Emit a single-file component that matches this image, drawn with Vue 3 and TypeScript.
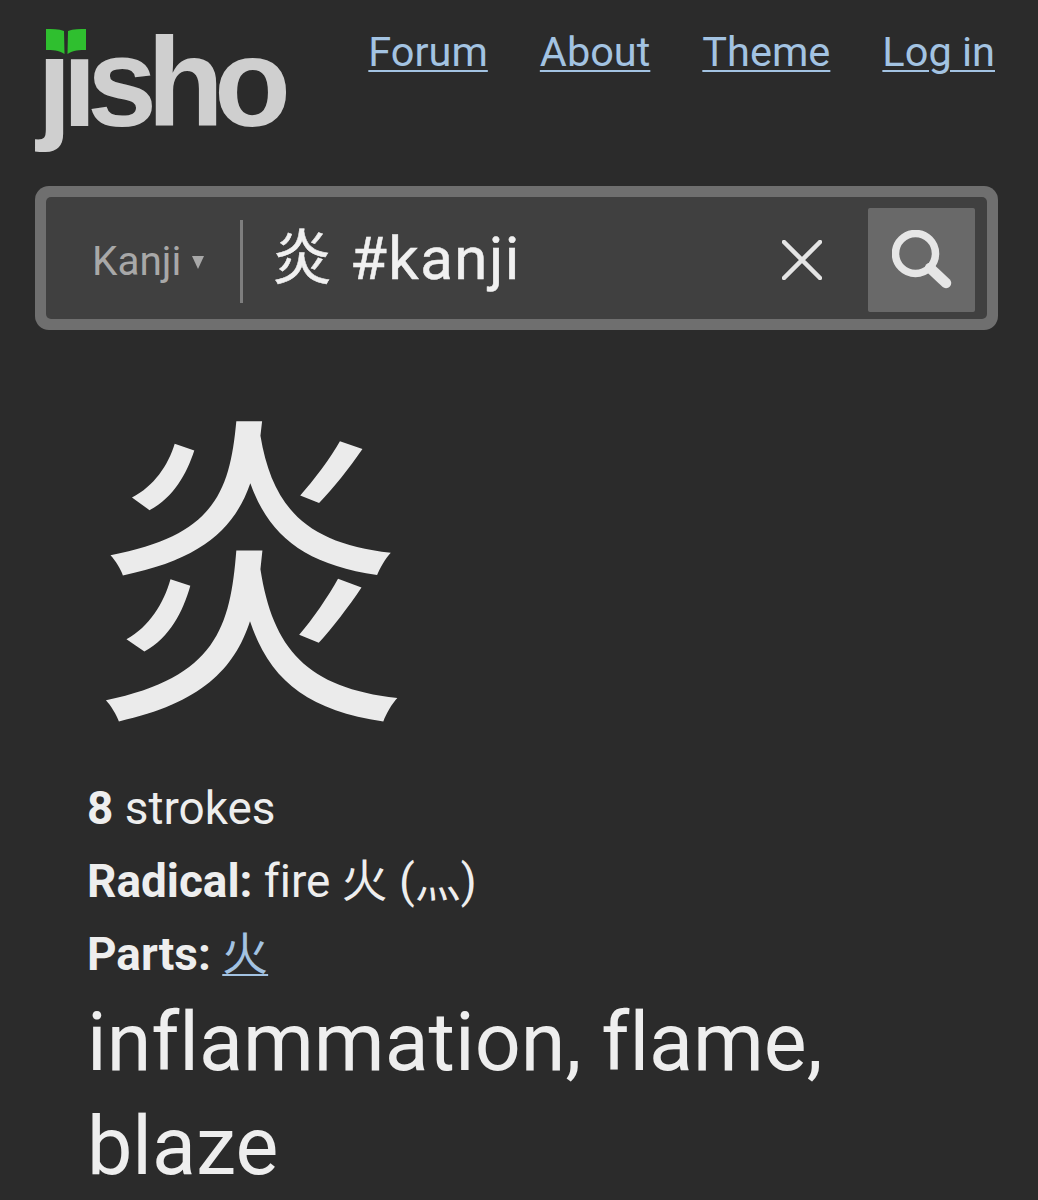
<script setup lang="ts">
const links: string[] = ['Forum', 'About', 'Theme', 'Log in']
</script>

<template>
  <div class="page">
    <header class="header">
      <div class="logo">
        <svg class="book" viewBox="0 0 40 25" aria-hidden="true">
          <path d="M0 0 C6 0 13 0 18 2 L18.5 25 C13 21 6 21 0 21 Z" fill="#2fbf2f" />
          <path d="M40 0 C34 0 27 0 22 2 L21.5 25 C27 21 34 21 40 21 Z" fill="#2fbf2f" />
        </svg>
        <span class="wordmark">ȷısho</span>
      </div>
      <nav class="nav">
        <a v-for="link in links" :key="link" class="link">{{ link }}</a>
      </nav>
    </header>

    <div class="search">
      <div class="search-inner">
        <div class="type">
          <span>Kanji</span>
          <i class="caret"></i>
        </div>
        <div class="query">炎 #kanji</div>
        <svg class="clear" viewBox="0 0 40 40" aria-hidden="true">
          <path d="M2 2 L38 38 M38 2 L2 38" stroke="#e4e4e4" stroke-width="4.5" stroke-linecap="round" />
        </svg>
        <div class="submit">
          <svg class="magnifier" viewBox="0 0 60 60" aria-hidden="true">
            <circle cx="23.5" cy="23.5" r="20" fill="none" stroke="#e6e6e6" stroke-width="7.5" />
            <path d="M38 38 L54 53" stroke="#e6e6e6" stroke-width="10.5" stroke-linecap="round" />
          </svg>
        </div>
      </div>
    </div>

    <main class="entry">
      <div class="kanji">炎</div>
      <div class="info">
        <p class="row"><b>8</b> strokes</p>
        <p class="row"><b>Radical:</b> fire 火 (灬)</p>
        <p class="row"><b>Parts:</b> <a class="link">火</a></p>
      </div>
      <h1 class="meaning">inflammation, flame, blaze</h1>
    </main>
  </div>
</template>

<style>
html, body { background: #2b2b2b; margin: 0; }
</style>

<style scoped>
.page {
  box-sizing: border-box;
  width: 1038px;
  height: 1200px;
  overflow: hidden;
  background: #2b2b2b;
  color: #eeeeee;
  font-family: Roboto, "Noto Sans CJK KR", sans-serif;
  font-variant-ligatures: none;
  padding: 0 40px 0 35px;
}
.header {
  display: flex;
  justify-content: space-between;
  align-items: flex-start;
  height: 186px;
}
.logo {
  position: relative;
  width: 260px;
  height: 150px;
}
.wordmark {
  display: block;
  padding-left: 2px;
  font-family: "Liberation Sans", Arial, sans-serif;
  font-weight: 700;
  font-size: 126px;
  line-height: 165px;
  letter-spacing: -10px;
  color: #cfcfcf;
}
.book {
  position: absolute;
  left: 11px;
  top: 29px;
  width: 40px;
  height: 25px;
}
.nav {
  display: flex;
  gap: 52px;
  padding: 26px 3px 0 0;
  font-size: 41.5px;
  line-height: 52px;
}
.link {
  color: #a3c3e2;
  text-decoration: underline;
  text-decoration-thickness: 2px;
  text-underline-offset: 4px;
}
.search {
  box-sizing: border-box;
  width: 963px;
  height: 144px;
  padding: 11px;
  background: #6f6f6f;
  border-radius: 14px;
}
.search-inner {
  box-sizing: border-box;
  display: flex;
  align-items: center;
  height: 100%;
  padding-top: 4px;
  background: #404040;
  border-radius: 5px;
}
.type {
  box-sizing: border-box;
  display: flex;
  align-items: center;
  gap: 11px;
  width: 197px;
  height: 83px;
  margin-top: 2px;
  padding-left: 46px;
  border-right: 3px solid #7e7e7e;
  color: #a8a8a8;
  font-size: 40.5px;
}
.caret {
  width: 0;
  height: 0;
  margin-top: 3px;
  border-left: 6px solid transparent;
  border-right: 6px solid transparent;
  border-top: 13px solid #a8a8a8;
}
.query {
  flex: 1;
  padding: 0 0 3px 29px;
  font-size: 60px;
  letter-spacing: 1.5px;
  line-height: 70px;
  color: #f0f0f0;
  -webkit-text-stroke: 0.5px #f0f0f0;
}
.clear {
  width: 40px;
  height: 40px;
  margin-right: 46px;
}
.submit {
  display: flex;
  align-items: center;
  justify-content: center;
  width: 107px;
  height: 104px;
  margin-right: 12px;
  background: #696969;
  border-radius: 2px;
}
.magnifier {
  width: 60px;
  height: 60px;
}
.entry {
  padding: 43px 0 0 52px;
}
.kanji {
  font-family: "Noto Sans CJK KR", sans-serif;
  font-size: 326px;
  line-height: 360px;
  color: #ebebeb;
}
.info {
  margin-top: 39px;
}
.row {
  margin: 0;
  font-size: 45.9px;
  line-height: 73px;
}
.meaning {
  margin: 0;
  width: 800px;
  font-size: 80.8px;
  font-weight: 400;
  line-height: 104px;
}
</style>
